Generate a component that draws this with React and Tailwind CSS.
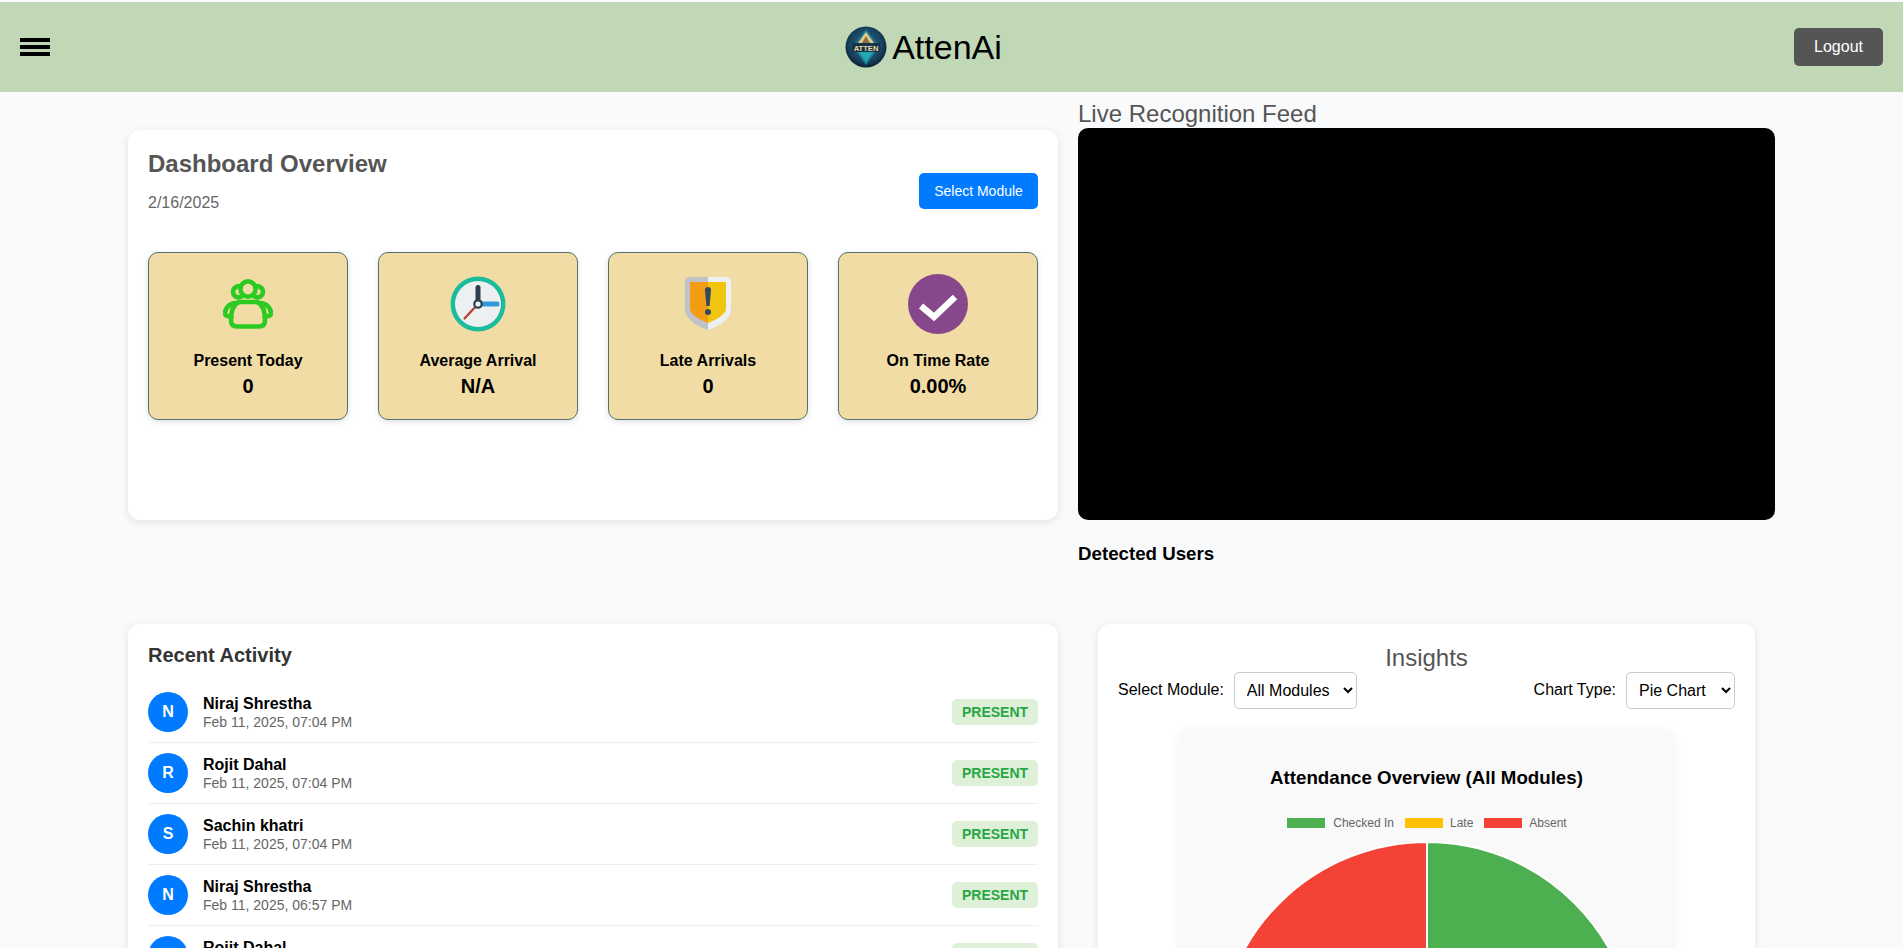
import React from "react";

const activity = [
  { name: "Niraj Shrestha", time: "Feb 11, 2025, 07:04 PM" },
  { name: "Rojit Dahal", time: "Feb 11, 2025, 07:04 PM" },
  { name: "Sachin khatri", time: "Feb 11, 2025, 07:04 PM" },
  { name: "Niraj Shrestha", time: "Feb 11, 2025, 06:57 PM" },
  { name: "Rojit Dahal", time: "Feb 11, 2025, 06:57 PM" },
];

function Logo() {
  return (
    <svg width="42" height="42" viewBox="0 0 42 42">
      <defs>
        <radialGradient id="logoBg" cx="50%" cy="45%" r="55%">
          <stop offset="0%" stopColor="#2f6f8c" />
          <stop offset="75%" stopColor="#17405c" />
          <stop offset="100%" stopColor="#0d2233" />
        </radialGradient>
      </defs>
      <circle cx="21" cy="21" r="20.5" fill="url(#logoBg)" />
      <path d="M21 3 L34 21 L21 39 L8 21 Z" fill="#1d7f95" />
      <path d="M21 6 L29 17 H13 Z" fill="#e5c98c" />
      <path d="M21 10 L25 17 H17 Z" fill="#8a6f3f" />
      <path d="M14 26 H28 L21 36 Z" fill="#25a7b5" />
      <rect x="7" y="17" width="28" height="9" fill="#14344c" />
      <text x="21" y="24.5" textAnchor="middle" fontSize="7.6" fontWeight="700" fill="#f0d9a0" fontFamily="Liberation Sans, sans-serif">ATTEN</text>
    </svg>
  );
}

function GroupIcon() {
  return (
    <svg width="50" height="50" viewBox="0 0 50 50" fill="none" stroke="#2ccb22" strokeWidth="4.6" strokeLinejoin="round" strokeLinecap="round">
      <circle cx="25" cy="10" r="7.6" />
      <path d="M17.6 7.5 A5.6 5.6 0 1 0 18.5 17.6" />
      <path d="M32.4 7.5 A5.6 5.6 0 1 1 31.5 17.6" />
      <path d="M16 23 H34 C39 25 42 32 42 41 C42 45 40 47.5 36 47.5 H14 C10 47.5 8 45 8 41 C8 32 11 25 16 23 Z" />
      <path d="M13 24 C7 24 2 29 2 34 C2 36.5 5 37.5 8.5 37.5" />
      <path d="M37 24 C43 24 48 29 48 34 C48 36.5 45 37.5 41.5 37.5" />
    </svg>
  );
}

function ClockIcon() {
  return (
    <svg width="56" height="56" viewBox="0 0 56 56" fill="none">
      <circle cx="28" cy="28" r="27.5" fill="#1abc9c" />
      <circle cx="28" cy="28" r="23" fill="#ecf0f1" />
      <path d="M28 28 L14.5 42.5" stroke="#c0392b" strokeWidth="2.2" strokeLinecap="round" />
      <path d="M28 28 H47" stroke="#3498db" strokeWidth="5" strokeLinecap="round" />
      <path d="M28 28 V11.5" stroke="#2c3e50" strokeWidth="5" strokeLinecap="round" />
      <circle cx="28" cy="28" r="4.8" fill="#2c3e50" />
      <circle cx="28" cy="28" r="2.6" fill="#ecf0f1" />
    </svg>
  );
}

function ShieldIcon() {
  return (
    <svg width="46" height="53" viewBox="0 0 46 53">
      <path d="M5 0 H23 V53 C14 50 6 45 2 39 C0 36 0 33 0 30 V5 C0 2 2 0 5 0 Z" fill="#bdc3c7" />
      <path d="M41 0 H23 V53 C32 50 40 45 44 39 C46 36 46 33 46 30 V5 C46 2 44 0 41 0 Z" fill="#ecf0f1" />
      <path d="M5 5 H23 V46 C15 43 9 39 6 35 C5 33 5 31 5 29 Z" fill="#f39c12" />
      <path d="M41 5 H23 V46 C31 43 37 39 40 35 C41 33 41 31 41 29 Z" fill="#f1c40f" />
      <path d="M23 10 C25 10 26 11 26 13 L24.6 29 H21.4 L20 13 C20 11 21 10 23 10 Z" fill="#34495e" />
      <circle cx="23" cy="35" r="3" fill="#34495e" />
    </svg>
  );
}

function CheckIcon() {
  return (
    <svg width="60" height="60" viewBox="0 0 60 60">
      <circle cx="30" cy="30" r="30" fill="#87488b" />
      <path d="M13 32 L26 43 L47 23" fill="none" stroke="#fff" strokeWidth="6.5" />
    </svg>
  );
}

function StatCard({ icon, label, value }) {
  return (
    <div className="w-[200px] h-[168px] flex flex-col items-center bg-[#f0dca4] border border-[#4f7470] rounded-[10px] shadow-[0_2px_6px_rgba(0,0,0,0.12)]">
      <div className="h-[99px] flex items-center justify-center pt-[2px]">{icon}</div>
      <div className="text-[16px] font-bold text-black leading-[18px]">{label}</div>
      <div className="text-[20px] font-bold text-black leading-[23px] mt-[5px]">{value}</div>
    </div>
  );
}

function ActivityRow({ name, time }) {
  return (
    <div className="flex items-center h-[61px] border-b border-[#eeeeee]">
      <div className="w-[40px] h-[40px] rounded-full bg-[#007bff] text-white font-bold text-[16px] flex items-center justify-center">
        {name[0]}
      </div>
      <div className="ml-[15px] flex-1">
        <div className="text-[16px] font-bold text-black leading-[18px]">{name}</div>
        <div className="text-[14px] text-[#666666] leading-[16px] mt-[1px]">{time}</div>
      </div>
      <span className="h-[26px] w-[86px] flex items-center justify-center rounded-[5px] bg-[#dff0d8] text-[#28a745] text-[14px] font-bold">
        PRESENT
      </span>
    </div>
  );
}

export default function App() {
  return (
    <div className="h-screen overflow-hidden bg-[#f9fafc] pt-[2px] font-['Liberation_Sans',Arial,sans-serif]">
      <header className="h-[90px] bg-[#c1d8b7] flex items-center justify-between pl-[20px] pr-[20px]">
        <button className="w-[30px] flex flex-col gap-[3px]">
          <span className="block h-[4px] bg-black" />
          <span className="block h-[4px] bg-black" />
          <span className="block h-[4px] bg-black" />
        </button>
        <div className="flex items-center gap-[5px] ml-[3px]">
          <Logo />
          <span className="text-[34px] text-black leading-none">AttenAi</span>
        </div>
        <button className="w-[89px] h-[38px] rounded-[5px] bg-[#555555] text-white text-[16px]">Logout</button>
      </header>

      <main className="pl-[128px]">
        <div className="flex items-start gap-[20px]">
          <section className="w-[930px] h-[390px] mt-[38px] bg-white rounded-[12px] shadow-[0_2px_8px_rgba(0,0,0,0.1)] p-[20px]">
            <div className="flex items-start justify-between">
              <div>
                <h2 className="text-[24px] font-bold text-[#555555] leading-[28px]">Dashboard Overview</h2>
                <p className="text-[16px] text-[#666666] leading-[18px] mt-[16px]">2/16/2025</p>
              </div>
              <button className="w-[119px] h-[36px] mt-[23px] rounded-[5px] bg-[#007bff] text-white text-[14px]">Select Module</button>
            </div>
            <div className="flex gap-[30px] mt-[40px]">
              <StatCard icon={<GroupIcon />} label="Present Today" value="0" />
              <StatCard icon={<ClockIcon />} label="Average Arrival" value="N/A" />
              <StatCard icon={<ShieldIcon />} label="Late Arrivals" value="0" />
              <StatCard icon={<CheckIcon />} label="On Time Rate" value="0.00%" />
            </div>
          </section>

          <section className="w-[697px] pt-[8px]">
            <h2 className="text-[24px] text-[#555555] leading-[28px]">Live Recognition Feed</h2>
            <div className="h-[392px] bg-black rounded-[10px]" />
            <h3 className="text-[18.72px] font-bold text-black leading-[21px] mt-[23px]">Detected Users</h3>
          </section>
        </div>

        <div className="flex items-start gap-[40px] mt-[60px]">
          <section className="w-[930px] bg-white rounded-[12px] shadow-[0_2px_8px_rgba(0,0,0,0.1)] p-[20px]">
            <h3 className="text-[20px] font-bold text-[#333333] leading-[23px]">Recent Activity</h3>
            <div className="mt-[15px]">
              {activity.map((a, i) => (
                <ActivityRow key={i} name={a.name} time={a.time} />
              ))}
            </div>
          </section>

          <section className="w-[657px] bg-white rounded-[12px] shadow-[0_2px_8px_rgba(0,0,0,0.1)] px-[20px] pt-[20px] pb-[20px]">
            <h2 className="text-[24px] text-[#555555] text-center leading-[28px]">Insights</h2>
            <div className="flex items-center justify-between">
              <div className="flex items-center gap-[10px]">
                <label className="text-[16px] text-black -mt-[2px]">Select Module:</label>
                <select className="w-[123px] h-[37px] px-[8px] text-[16px] text-black bg-white border border-[#cccccc] rounded-[5px]">
                  <option>All Modules</option>
                </select>
              </div>
              <div className="flex items-center gap-[10px]">
                <label className="text-[16px] text-black -mt-[2px]">Chart Type:</label>
                <select className="w-[109px] h-[37px] px-[8px] text-[16px] text-black bg-white border border-[#cccccc] rounded-[5px]">
                  <option>Pie Chart</option>
                </select>
              </div>
            </div>
            <div className="w-[497px] mx-auto mt-[19px] bg-[#f9f9f9] rounded-[12px] shadow-[0_2px_8px_rgba(0,0,0,0.05)] pt-[38px] pb-[20px]">
              <h4 className="text-[18.7px] font-bold text-black text-center leading-[23px]">Attendance Overview (All Modules)</h4>
              <div className="flex items-center justify-center gap-[11px] mt-[27px] h-[14px] ml-[1px] text-[12px] text-[#666666] leading-none">
                <span className="flex items-center gap-[8px]"><i className="block w-[38px] h-[10px] bg-[#4caf50]" />Checked In</span>
                <span className="flex items-center gap-[7px]"><i className="block w-[38px] h-[10px] bg-[#ffc107]" />Late</span>
                <span className="flex items-center gap-[7px]"><i className="block w-[38px] h-[10px] bg-[#f44336]" />Absent</span>
              </div>
              <svg className="block mx-auto mt-[11px]" width="420" height="420" viewBox="0 0 420 420">
                <path d="M210 210 V1 A209 209 0 0 1 210 419 Z" fill="#4caf50" stroke="#fff" strokeWidth="2" />
                <path d="M210 210 V419 A209 209 0 0 1 210 1 Z" fill="#f44336" stroke="#fff" strokeWidth="2" />
              </svg>
            </div>
          </section>
        </div>
      </main>
    </div>
  );
}
